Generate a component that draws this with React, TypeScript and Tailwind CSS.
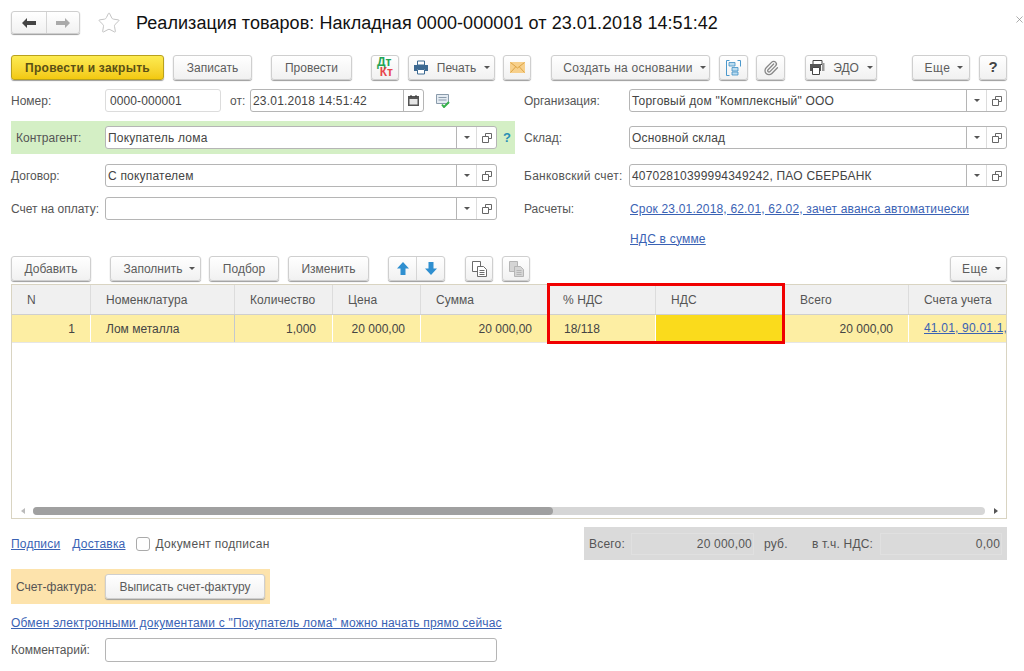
import React from "react";
import { Paperclip, Star, X } from "lucide-react";

const btn =
  "flex h-[25px] shrink-0 items-center justify-center rounded-[3px] border border-[#cfcfcf] bg-gradient-to-b from-white to-[#f1f1f1] text-[12px] text-[#5c5c5c] shadow-[0_1px_1px_#9c9c9c]";

const Caret = () => (
  <svg width="6" height="3" viewBox="0 0 6 3" className="shrink-0">
    <path d="M0 0h6L3 3z" fill="#555" />
  </svg>
);

const OpenIcon = () => (
  <svg width="10" height="10" viewBox="0 0 10 10" fill="none" stroke="#666" strokeWidth="1">
    <path d="M3.500 3V.5h6v5H7" />
    <path d="M.5 3.500h6v6h-6z" />
  </svg>
);

const PrintIcon = () => (
  <svg width="16" height="15" viewBox="0 0 16 15">
    <path d="M4.500 1h7v4h-7z" fill="#fff" stroke="#3d6a92" />
    <path d="M1 5h14v6h-3V9H4v2H1z" fill="#3d6a92" />
    <path d="M4.500 9.500h7v4.500h-7z" fill="#fff" stroke="#3d6a92" />
  </svg>
);

const MailIcon = () => (
  <svg width="15" height="11" viewBox="0 0 15 11">
    <path d="M0 0h15v11H0z" fill="#f7d08c" />
    <path d="M.5.5 7.500 6l7-5.500M.5 10.500 5.500 5M14.500 10.500 9.500 5" fill="none" stroke="#dca444" />
  </svg>
);

const StructIcon = () => (
  <svg width="15" height="16" viewBox="0 0 15 16">
    <path d="M3.500.5H.5v15h3M11.500.5h3v6" fill="none" stroke="#4a98cc" />
    <path d="M3 2.500h6V6H3zM6 7.500h6V11H6zM6 12h6v3H6z" fill="#bcdcf0" stroke="#3f8fc4" strokeWidth="0.8" />
  </svg>
);

const EdoIcon = () => (
  <svg width="16" height="15" viewBox="0 0 16 15">
    <path d="M4 .5h9v4H4z" fill="#fff" stroke="#444" />
    <path d="M1 4h11v7H1z" fill="#555" />
    <path d="M3.500 7.500h7v7h-7z" fill="#fff" stroke="#444" />
    <path d="M13 3h2.500v8H13z" fill="#999" />
  </svg>
);

const ArrowUp = () => (
  <svg width="12" height="13" viewBox="0 0 12 13">
    <path d="M6 0l6 6.500H8.500V13h-5V6.500H0z" fill="#2f8fd0" />
  </svg>
);

const ArrowDown = () => (
  <svg width="12" height="13" viewBox="0 0 12 13">
    <path d="M6 13L0 6.500h3.500V0h5v6.500H12z" fill="#2f8fd0" />
  </svg>
);

const CopyIcon = ({ color = "#6b6b6b", fill = "#fff" }: { color?: string; fill?: string }) => (
  <svg width="15" height="16" viewBox="0 0 15 16" stroke={color}>
    <path d="M.5.5h8v10h-8z" fill={fill} />
    <path d="M5.500 5.500h6l3 3v7h-9z" fill={fill} />
    <path d="M7.500 9.500h5M7.500 11.500h5M7.500 13.500h5" fill="none" />
  </svg>
);

const SelectBox = ({ value, w }: { value: string; w: number }) => (
  <div
    className="flex h-[23px] shrink-0 items-stretch rounded-[3px] border border-[#b5b5b5] bg-white"
    style={{ width: w }}
  >
    <span className="flex-1 truncate pl-[2px] leading-[22px] tracking-[0.2px] text-[#444]">{value}</span>
    <span className="flex w-[20px] items-center justify-center border-l border-[#b5b5b5]">
      <Caret />
    </span>
    <span className="flex w-[20px] items-center justify-center border-l border-[#dcdcdc]">
      <OpenIcon />
    </span>
  </div>
);

const Field = ({
  value,
  w,
  labelW,
  label,
}: {
  value: string;
  w: number;
  labelW: number;
  label: React.ReactNode;
}) => (
  <div className="flex h-[23px] items-center">
    <span className="shrink-0" style={{ width: labelW }}>
      {label}
    </span>
    <SelectBox value={value} w={w} />
  </div>
);

const A = ({ children, className = "" }: { children: React.ReactNode; className?: string }) => (
  <a className={`tracking-[0.2px] text-[#3a62b4] underline ${className}`}>{children}</a>
);

const headers = ["N", "Номенклатура", "Количество", "Цена", "Сумма", "% НДС", "НДС", "Всего", "Счета учета"];
const cols = "grid grid-cols-[79px_144px_98px_88px_127px_108px_129px_124px_97px]";

export default function App() {
  return (
    <div className="relative h-[671px] w-[1024px] overflow-hidden bg-white pl-[11px] pt-[11px] font-['Liberation_Sans',sans-serif] text-[12px] text-[#555]">
      {/* title */}
      <div className="flex h-[23px] w-[1007px] items-center">
        <div className="flex h-[23px] w-[69px] rounded-[3px] border border-[#cfcfcf] bg-gradient-to-b from-white to-[#f1f1f1] shadow-[0_1px_1px_#9c9c9c]">
          <span className="flex w-[35px] items-center justify-center border-r border-[#d5d5d5]">
            <svg width="14" height="10" viewBox="0 0 14 10">
              <path d="M5 0v3h9v4H5v3L0 5z" fill="#444" />
            </svg>
          </span>
          <span className="flex flex-1 items-center justify-center">
            <svg width="14" height="10" viewBox="0 0 14 10">
              <path d="M9 0v3H0v4h9v3l5-5z" fill="#aaa" />
            </svg>
          </span>
        </div>
        <Star size={24} strokeWidth={1} className="ml-[17px] text-[#c4c4c4]" />
        <h1 className="ml-[15px] mt-[1px] whitespace-nowrap text-[18px] leading-[23px] tracking-[0.06px] text-[#111]">
          Реализация товаров: Накладная 0000-000001 от 23.01.2018 14:51:42
        </h1>
        <X size={11} strokeWidth={1.5} className="ml-auto mr-[-7px] mt-[-7px] text-[#888]" />
      </div>

      {/* main toolbar */}
      <div className="mt-[21px] flex w-[996px]">
        <button className="flex h-[25px] w-[153px] shrink-0 items-center justify-center rounded-[3px] border border-[#b9a11d] bg-gradient-to-b from-[#fdeb50] to-[#f2c90c] text-[12px] font-bold tracking-[0.25px] text-[#5a5015] shadow-[0_1px_1px_#9c9c9c]">
          Провести и закрыть
        </button>
        <button className={`${btn} ml-[9px] w-[79px]`}>Записать</button>
        <button className={`${btn} ml-[19px] w-[81px]`}>Провести</button>
        <button className={`${btn} ml-[19px] w-[28px] flex-col gap-[1px] px-[5px] text-[8px] font-bold leading-[9px]`}>
          <span className="self-start text-[#23a455]">Дт</span>
          <span className="self-end text-[#e8474c]">Кт</span>
        </button>
        <button className={`${btn} ml-[9px] w-[87px] gap-[8px]`}>
          <PrintIcon />
          Печать
          <Caret />
        </button>
        <button className={`${btn} ml-[8px] w-[28px]`}>
          <MailIcon />
        </button>
        <button className={`${btn} ml-[20px] w-[159px] gap-[7px] pl-[8px] tracking-[0.25px]`}>
          Создать на основании
          <Caret />
        </button>
        <button className={`${btn} ml-[9px] w-[29px]`}>
          <StructIcon />
        </button>
        <button className={`${btn} ml-[8px] w-[29px]`}>
          <Paperclip size={16} className="text-[#888]" />
        </button>
        <button className={`${btn} ml-[20px] w-[72px] gap-[8px]`}>
          <EdoIcon />
          ЭДО
          <Caret />
        </button>
        <button className={`${btn} ml-[35px] w-[58px] gap-[7px] pl-[6px] tracking-[0.5px]`}>
          Еще
          <Caret />
        </button>
        <button className={`${btn} ml-[9px] w-[28px] text-[15px] font-bold text-[#444]`}>?</button>
      </div>

      {/* form */}
      <div className="mt-[9px] flex h-[167px] w-[996px]">
        <div className="w-[504px] shrink-0">
          <div className="flex h-[23px] items-center">
            <span className="w-[94px] shrink-0">Номер:</span>
            <div className="h-[23px] w-[116px] rounded-[3px] border border-[#dcdcdc] pl-[4px] leading-[22px] tracking-[0.1px] text-[#444]">
              0000-000001
            </div>
            <span className="ml-[9px] w-[20px]">от:</span>
            <div className="flex h-[23px] w-[174px] rounded-[3px] border border-[#b5b5b5]">
              <span className="flex-1 pl-[2px] leading-[22px] tracking-[0.2px] text-[#444]">23.01.2018 14:51:42</span>
              <span className="flex w-[20px] items-center justify-center border-l border-[#b5b5b5]">
                <svg width="11" height="11" viewBox="0 0 11 11">
                  <path d="M0 1h11v10H0z" fill="#555" />
                  <path d="M1.500 4h8v5.500h-8z" fill="#e6e6e6" />
                  <path d="M2.500 0h1v2h-1zM7.500 0h1v2h-1z" fill="#333" />
                </svg>
              </span>
            </div>
            <svg width="15" height="14" viewBox="0 0 15 14" className="ml-[12px]">
              <path d="M.5.500h12v9H.500z" fill="#e4ebf2" stroke="#8a9bab" />
              <path d="M2.500 3.500h8M2.500 6h8" stroke="#8a9bab" />
              <path d="M6 10.500l2 2.500 5-5" fill="none" stroke="#35b04a" strokeWidth="2" />
            </svg>
          </div>
          <div className="mt-[9px] flex h-[33px] items-center bg-[#d4efc5] pl-[5px]">
            <span className="w-[89px] shrink-0">Контрагент:</span>
            <SelectBox value="Покупатель лома" w={392} />
            <span className="ml-[6px] text-[13px] font-bold text-[#2a8fb5]">?</span>
          </div>
          <div className="mt-[10px]">
            <Field label="Договор:" labelW={94} value="С покупателем" w={392} />
          </div>
          <div className="mt-[10px]">
            <Field label="Счет на оплату:" labelW={94} value="" w={392} />
          </div>
        </div>

        <div className="ml-[9px] w-[483px] shrink-0">
          <Field label="Организация:" labelW={105} value={'Торговый дом "Комплексный" ООО'} w={378} />
          <div className="mt-[14px]">
            <Field label="Склад:" labelW={105} value="Основной склад" w={378} />
          </div>
          <div className="mt-[15px]">
            <Field
              label={<span className="tracking-[0.25px]">Банковский счет:</span>}
              labelW={105}
              value="40702810399994349242, ПАО СБЕРБАНК"
              w={378}
            />
          </div>
          <div className="mt-[10px] flex h-[23px] items-center">
            <span className="w-[106px] shrink-0">Расчеты:</span>
            <A className="!tracking-[0.18px]">Срок 23.01.2018, 62.01, 62.02, зачет аванса автоматически</A>
          </div>
          <div className="mt-[7px] flex h-[23px] items-center pl-[106px]">
            <A>НДС в сумме</A>
          </div>
        </div>
      </div>

      {/* table toolbar */}
      <div className="flex w-[996px]">
        <button className={`${btn} w-[80px]`}>Добавить</button>
        <button className={`${btn} ml-[19px] w-[91px] gap-[7px] pl-[8px]`}>
          Заполнить
          <Caret />
        </button>
        <button className={`${btn} ml-[8px] w-[70px]`}>Подбор</button>
        <button className={`${btn} ml-[9px] w-[81px]`}>Изменить</button>
        <div className={`${btn} ml-[19px] w-[57px] !items-stretch`}>
          <span className="flex w-[28px] items-center justify-center border-r border-[#d5d5d5]">
            <ArrowUp />
          </span>
          <span className="flex flex-1 items-center justify-center">
            <ArrowDown />
          </span>
        </div>
        <button className={`${btn} ml-[20px] w-[28px]`}>
          <CopyIcon />
        </button>
        <button className={`${btn} ml-[9px] w-[28px]`}>
          <CopyIcon color="#b5b5b5" fill="#d5d5d5" />
        </button>
        <button className={`${btn} ml-auto w-[57px] gap-[7px] pl-[6px] tracking-[0.5px]`}>
          Еще
          <Caret />
        </button>
      </div>

      {/* table */}
      <div className="relative mt-[3px] flex h-[235px] w-[996px] flex-col border border-[#d9d4c2]">
        <div className={`${cols} h-[30px] border-b border-[#cfcfcf] bg-[#f0f0f0] tracking-[0.08px]`}>
          {headers.map((h) => (
            <div key={h} className="flex items-center whitespace-nowrap border-r border-[#dcdcdc] pl-[15px] last:border-r-0">
              {h}
            </div>
          ))}
        </div>
        <div className={`${cols} h-[28px] overflow-hidden border-b border-[#e6e6e6] bg-[#fdeea3] text-[#444]`}>
          <div className="flex items-center justify-end border-r border-white pr-[15px]">1</div>
          <div className="flex items-center border-r border-[#c4c8cf] pl-[15px]">Лом металла</div>
          <div className="flex items-center justify-end border-r border-white pr-[16px]">1,000</div>
          <div className="flex items-center justify-end border-r border-white pr-[15px]">20 000,00</div>
          <div className="flex items-center justify-end border-r border-white pr-[15px]">20 000,00</div>
          <div className="flex items-center border-r border-white pl-[16px]">18/118</div>
          <div className="border-r border-white bg-[#fadb1c]" />
          <div className="flex items-center justify-end border-r border-white pr-[15px]">20 000,00</div>
          <div className="overflow-hidden whitespace-nowrap pl-[15px] leading-[26px]">
            <A>41.01, 90.01.1,</A>
          </div>
        </div>
        <div className="flex-1" />
        <div className="mb-[3px] flex h-[8px] items-center">
          <svg width="4" height="6" viewBox="0 0 4 6" className="ml-[9px]">
            <path d="M4 0v6L0 3z" fill="#bbb" />
          </svg>
          <div className="ml-[8px] h-[8px] w-[952px] rounded-[4px] bg-[#d6d6d6]">
            <div className="h-[8px] w-[520px] rounded-[4px] bg-[#a0a0a0]" />
          </div>
          <svg width="4" height="6" viewBox="0 0 4 6" className="ml-[9px]">
            <path d="M0 0v6l4-3z" fill="#555" />
          </svg>
        </div>
        <div className="absolute left-[535px] top-[-2px] h-[61px] w-[238px] border-[3px] border-[#f00000]" />
      </div>

      {/* totals */}
      <div className="mt-[8px] flex h-[33px] w-[996px] items-center">
        <A>Подписи</A>
        <A className="ml-[12px]">Доставка</A>
        <span className="ml-[11px] h-[14px] w-[14px] rounded-[3px] border border-[#aaa]" />
        <span className="ml-[5px] tracking-[0.3px]">Документ подписан</span>
        <div className="ml-auto flex h-[33px] w-[423px] items-center bg-[#dadada] pl-[5px] tracking-[0.2px] text-[#555]">
          <span className="w-[42px]">Всего:</span>
          <span className="flex h-[22px] w-[123px] items-center justify-end border border-[#e0e0e0] pr-[1px]">20 000,00</span>
          <span className="ml-[10px] w-[48px]">руб.</span>
          <span className="w-[68px] whitespace-nowrap">в т.ч. НДС:</span>
          <span className="flex h-[22px] w-[122px] items-center justify-end border border-[#e0e0e0] pr-[1px]">0,00</span>
        </div>
      </div>

      <div className="mt-[9px] flex h-[35px] w-[259px] items-center bg-[#fde3ac] pl-[5px]">
        <span className="w-[89px] shrink-0">Счет-фактура:</span>
        <button className={`${btn} w-[160px]`}>Выписать счет-фактуру</button>
      </div>

      <div className="mt-[11px] h-[16px] leading-[16px]">
        <A>Обмен электронными документами с "Покупатель лома" можно начать прямо сейчас</A>
      </div>

      <div className="mt-[7px] flex h-[24px] items-center">
        <span className="w-[94px] shrink-0">Комментарий:</span>
        <div className="h-[24px] w-[392px] rounded-[3px] border border-[#b5b5b5]" />
      </div>
    </div>
  );
}
